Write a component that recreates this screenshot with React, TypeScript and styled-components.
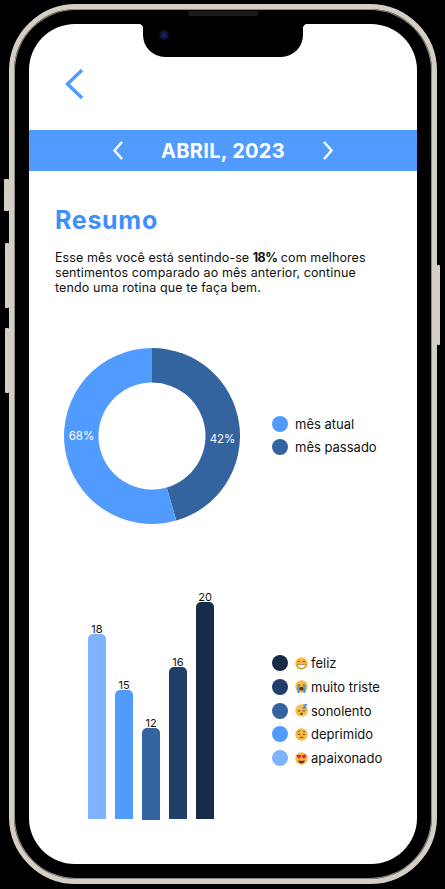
import React from "react";
import styled, { createGlobalStyle } from "styled-components";

const GlobalStyle = createGlobalStyle`
	html, body {
		margin: 0;
		padding: 0;
		background: #000;
		font-family: "Inter", "Liberation Sans", sans-serif;
	}
`;

const Page = styled.div`
	width: 445px;
	height: 889px;
	padding: 4px 0 0 9px;
	box-sizing: border-box;
	background: #000;
	overflow: hidden;
`;

const Phone = styled.div`
	position: relative;
	width: 428px;
	height: 880px;
	box-sizing: border-box;
	padding: 15px;
	border: 5px solid #d4cec4;
	border-radius: 67px;
	background: #000;
	box-shadow: inset 0 0 0 1px #8f8b84;
`;

const SideButton = styled.div<{ $side: "left" | "right"; $top: number; $h: number; $w: number }>`
	position: absolute;
	top: ${(p) => p.$top}px;
	${(p) => p.$side}: ${(p) => -5 - p.$w}px;
	width: ${(p) => p.$w}px;
	height: ${(p) => p.$h}px;
	background: #d4cec4;
	border-radius: 1px;
`;

const Speaker = styled.div`
	position: absolute;
	top: 2px;
	left: 174px;
	width: 70px;
	height: 5px;
	border-radius: 2px;
	background: #1b1b1b;
`;

const Notch = styled.div`
	position: absolute;
	top: 15px;
	left: 129px;
	width: 160px;
	height: 33px;
	background: #000;
	border-radius: 0 0 22px 22px;
	z-index: 2;

	&::before,
	&::after {
		content: "";
		position: absolute;
		top: 0;
		width: 5px;
		height: 5px;
	}

	&::before {
		left: -5px;
		background: radial-gradient(circle at 0 100%, transparent 5px, #000 5.5px);
	}

	&::after {
		right: -5px;
		background: radial-gradient(circle at 100% 100%, transparent 5px, #000 5.5px);
	}
`;

const Camera = styled.div`
	position: absolute;
	top: 6px;
	left: 16px;
	width: 10px;
	height: 10px;
	border-radius: 50%;
	background: radial-gradient(circle, #1c2a6b 0%, #10163a 45%, #07080f 100%);
`;

const Screen = styled.div`
	width: 388px;
	height: 840px;
	background: #fff;
	border-radius: 46px;
	overflow: hidden;
	display: flex;
	flex-direction: column;
`;

const Header = styled.div`
	height: 106px;
	box-sizing: border-box;
	padding: 45px 0 0 36px;
	flex: none;
`;

const MonthBand = styled.div`
	height: 41px;
	flex: none;
	display: flex;
	align-items: center;
	justify-content: center;
	gap: 36px;
	background: #529bfe;
`;

const MonthTitle = styled.div`
	width: 128px;
	text-align: center;
	color: #fff;
	font-size: 20px;
	font-weight: 700;
	letter-spacing: 0.3px;
	white-space: nowrap;
`;

const Content = styled.div`
	flex: 1;
	display: flex;
	flex-direction: column;
`;

const Title = styled.h2`
	margin: 34px 0 0 26px;
	font-size: 25px;
	line-height: 30px;
	font-weight: 700;
	letter-spacing: 0.7px;
	color: #3f8ffb;
`;

const Paragraph = styled.p`
	margin: 15px 0 0 26px;
	font-size: 12.5px;
	line-height: 15px;
	color: #111;
	white-space: nowrap;
	letter-spacing: 0.1px;

	b {
		font-weight: 700;
		letter-spacing: -0.6px;
	}
`;

const DonutSection = styled.div`
	margin-top: 52.5px;
	padding-left: 35px;
	display: flex;
	align-items: center;
	gap: 32px;
`;

const Legend = styled.div`
	display: flex;
	flex-direction: column;
	gap: 7px;
`;

const LegendRow = styled.div`
	display: flex;
	align-items: center;
	gap: 7px;
	height: 16px;
	font-size: 13px;
	color: #111;
	white-space: nowrap;
`;

const Dot = styled.span<{ $color: string }>`
	width: 16px;
	height: 16px;
	flex: none;
	border-radius: 50%;
	background: ${(p) => p.$color};
`;

const LegendLabel = styled.span`
	display: flex;
	align-items: center;
	gap: 3px;
`;

const ChartSection = styled.div`
	margin-top: 64.5px;
	padding-left: 59px;
	display: flex;
	align-items: flex-start;
	gap: 58px;
`;

const Bars = styled.div`
	display: flex;
	align-items: flex-end;
	gap: 9px;
	height: 231px;
`;

const BarColumn = styled.div`
	width: 18px;
	display: flex;
	flex-direction: column;
	align-items: center;
`;

const BarValue = styled.span`
	font-size: 11px;
	line-height: 10px;
	color: #111;
`;

const Bar = styled.div<{ $h: number; $color: string; $drop?: number }>`
	width: 18px;
	height: ${(p) => p.$h}px;
	margin-bottom: ${(p) => -(p.$drop ?? 0)}px;
	background: ${(p) => p.$color};
	border-radius: 5px 5px 0 0;
`;

const ChartLegend = styled(Legend)`
	padding-top: 67px;
	gap: 7.75px;
`;

const Chevron = ({ dir, w, h, stroke, color }: { dir: "left" | "right"; w: number; h: number; stroke: number; color: string }) => {
	const points =
		dir === "left"
			? `${w - 1},1 2.5,${h / 2} ${w - 1},${h - 1}`
			: `1,1 ${w - 2.5},${h / 2} 1,${h - 1}`;
	return (
		<svg width={w} height={h} viewBox={`0 0 ${w} ${h}`} style={{ display: "block", flex: "none" }}>
			<polyline points={points} fill="none" stroke={color} strokeWidth={stroke} />
		</svg>
	);
};

// ponto na circunferencia, angulo a partir do topo em sentido horario
const polar = (r: number, deg: number) => {
	const a = ((deg - 90) * Math.PI) / 180;
	return `${88 + r * Math.cos(a)} ${88 + r * Math.sin(a)}`;
};

const ringSlice = (from: number, to: number) => {
	const large = to - from > 180 ? 1 : 0;
	return `M${polar(88, from)} A88 88 0 ${large} 1 ${polar(88, to)} L${polar(53.5, to)} A53.5 53.5 0 ${large} 0 ${polar(53.5, from)} Z`;
};

const DonutLabel = styled.text`
	font-family: "Inter", "Liberation Sans", sans-serif;
	font-size: 11.5px;
	font-weight: 400;
	fill: #fff;
	text-anchor: middle;
`;

const Donut = () => (
	<svg width={176} height={176} viewBox="0 0 176 176" style={{ display: "block", flex: "none" }}>
		<path d={ringSlice(0, 164)} fill="#34649f" />
		<path d={ringSlice(164, 360)} fill="#529bfe" />
		<DonutLabel x={17.5} y={92}>
			68%
		</DonutLabel>
		<DonutLabel x={158.5} y={95}>
			42%
		</DonutLabel>
	</svg>
);

const Emoji = ({ kind }: { kind: "feliz" | "triste" | "sono" | "deprimido" | "apaixonado" }) => (
	<svg width={13} height={13} viewBox="0 0 24 24" style={{ display: "block", flex: "none" }}>
		<circle cx={12} cy={12} r={11.5} fill="#f9bd45" />
		{kind === "feliz" && (
			<>
				<path d="M5 9 Q7.5 6 10 9 M14 9 Q16.5 6 19 9" fill="none" stroke="#6b4316" strokeWidth={1.8} />
				<path d="M4 13 Q12 16 20 13 Q19 21 12 21 Q5 21 4 13Z" fill="#fff" stroke="#6b4316" strokeWidth={1} />
			</>
		)}
		{kind === "triste" && (
			<>
				<path d="M5 10 Q7.5 7.5 10 10 M14 10 Q16.5 7.5 19 10" fill="none" stroke="#6b4316" strokeWidth={1.8} />
				<rect x={4} y={10} width={5} height={14} rx={2} fill="#4ba3ea" />
				<rect x={15} y={10} width={5} height={14} rx={2} fill="#4ba3ea" />
				<ellipse cx={12} cy={16} rx={4} ry={3.5} fill="#6b3016" />
			</>
		)}
		{kind === "sono" && (
			<>
				<path d="M5 12 Q7.5 14.5 10 12 M14 12 Q16.5 14.5 19 12" fill="none" stroke="#6b4316" strokeWidth={1.8} />
				<ellipse cx={12} cy={18} rx={2.5} ry={2} fill="#6b3016" />
				<path d="M15 1.5h6l-6 6h6" fill="none" stroke="#4b78d8" strokeWidth={2} />
			</>
		)}
		{kind === "deprimido" && (
			<>
				<path d="M5 11 Q7.5 13.5 10 11 M14 11 Q16.5 13.5 19 11" fill="none" stroke="#6b4316" strokeWidth={1.8} />
				<path d="M5 7 L9.5 5.5 M19 7 L14.5 5.5" fill="none" stroke="#6b4316" strokeWidth={1.5} />
				<path d="M8.5 18 Q12 15.5 15.5 18" fill="none" stroke="#6b4316" strokeWidth={1.8} />
			</>
		)}
		{kind === "apaixonado" && (
			<>
				<path d="M7.5 13 L3 8.5 A2.8 2.8 0 0 1 7.5 5.5 A2.8 2.8 0 0 1 11.5 8.5Z" fill="#e5263c" />
				<path d="M16.5 13 L12.5 8.5 A2.8 2.8 0 0 1 16.5 5.5 A2.8 2.8 0 0 1 21 8.5Z" fill="#e5263c" />
				<path d="M6 15 Q12 17 18 15 Q17 21 12 21 Q7 21 6 15Z" fill="#6b3016" />
			</>
		)}
	</svg>
);

const barData = [
	{ value: 18, h: 185, color: "#7fb3ff" },
	{ value: 15, h: 129, color: "#529bfe" },
	{ value: 12, h: 92, color: "#34649f", drop: 1 },
	{ value: 16, h: 152, color: "#1f3f68" },
	{ value: 20, h: 217, color: "#162b48" },
];

const moods = [
	{ kind: "feliz", label: "feliz", color: "#162b48" },
	{ kind: "triste", label: "muito triste", color: "#1f3f68" },
	{ kind: "sono", label: "sonolento", color: "#34649f" },
	{ kind: "deprimido", label: "deprimido", color: "#529bfe" },
	{ kind: "apaixonado", label: "apaixonado", color: "#7fb3ff" },
] as const;

const App: React.FC = () => {
	return (
		<Page>
			<GlobalStyle />
			<Phone>
				<SideButton $side="left" $top={170} $h={32} $w={5} />
				<SideButton $side="left" $top={234} $h={65} $w={4} />
				<SideButton $side="left" $top={319} $h={65} $w={4} />
				<SideButton $side="right" $top={256} $h={80} $w={3} />
				<Speaker />
				<Notch>
					<Camera />
				</Notch>
				<Screen>
					<Header>
						<Chevron dir="left" w={18} h={30} stroke={3.4} color="#529bfe" />
					</Header>
					<MonthBand>
						<Chevron dir="left" w={11} h={19} stroke={2.4} color="#fff" />
						<MonthTitle>ABRIL, 2023</MonthTitle>
						<Chevron dir="right" w={11} h={19} stroke={2.4} color="#fff" />
					</MonthBand>
					<Content>
						<Title>Resumo</Title>
						<Paragraph>
							Esse mês você está sentindo-se <b>18%</b> com melhores
							<br />
							sentimentos comparado ao mês anterior, continue
							<br />
							tendo uma rotina que te faça bem.
						</Paragraph>
						<DonutSection>
							<Donut />
							<Legend>
								<LegendRow>
									<Dot $color="#529bfe" />
									<LegendLabel>mês atual</LegendLabel>
								</LegendRow>
								<LegendRow>
									<Dot $color="#34649f" />
									<LegendLabel>mês passado</LegendLabel>
								</LegendRow>
							</Legend>
						</DonutSection>
						<ChartSection>
							<Bars>
								{barData.map((bar) => (
									<BarColumn key={bar.value}>
										<BarValue>{bar.value}</BarValue>
										<Bar $h={bar.h} $color={bar.color} $drop={bar.drop} />
									</BarColumn>
								))}
							</Bars>
							<ChartLegend>
								{moods.map((mood) => (
									<LegendRow key={mood.kind}>
										<Dot $color={mood.color} />
										<LegendLabel>
											<Emoji kind={mood.kind} />
											{mood.label}
										</LegendLabel>
									</LegendRow>
								))}
							</ChartLegend>
						</ChartSection>
					</Content>
				</Screen>
			</Phone>
		</Page>
	);
};

export default App;
